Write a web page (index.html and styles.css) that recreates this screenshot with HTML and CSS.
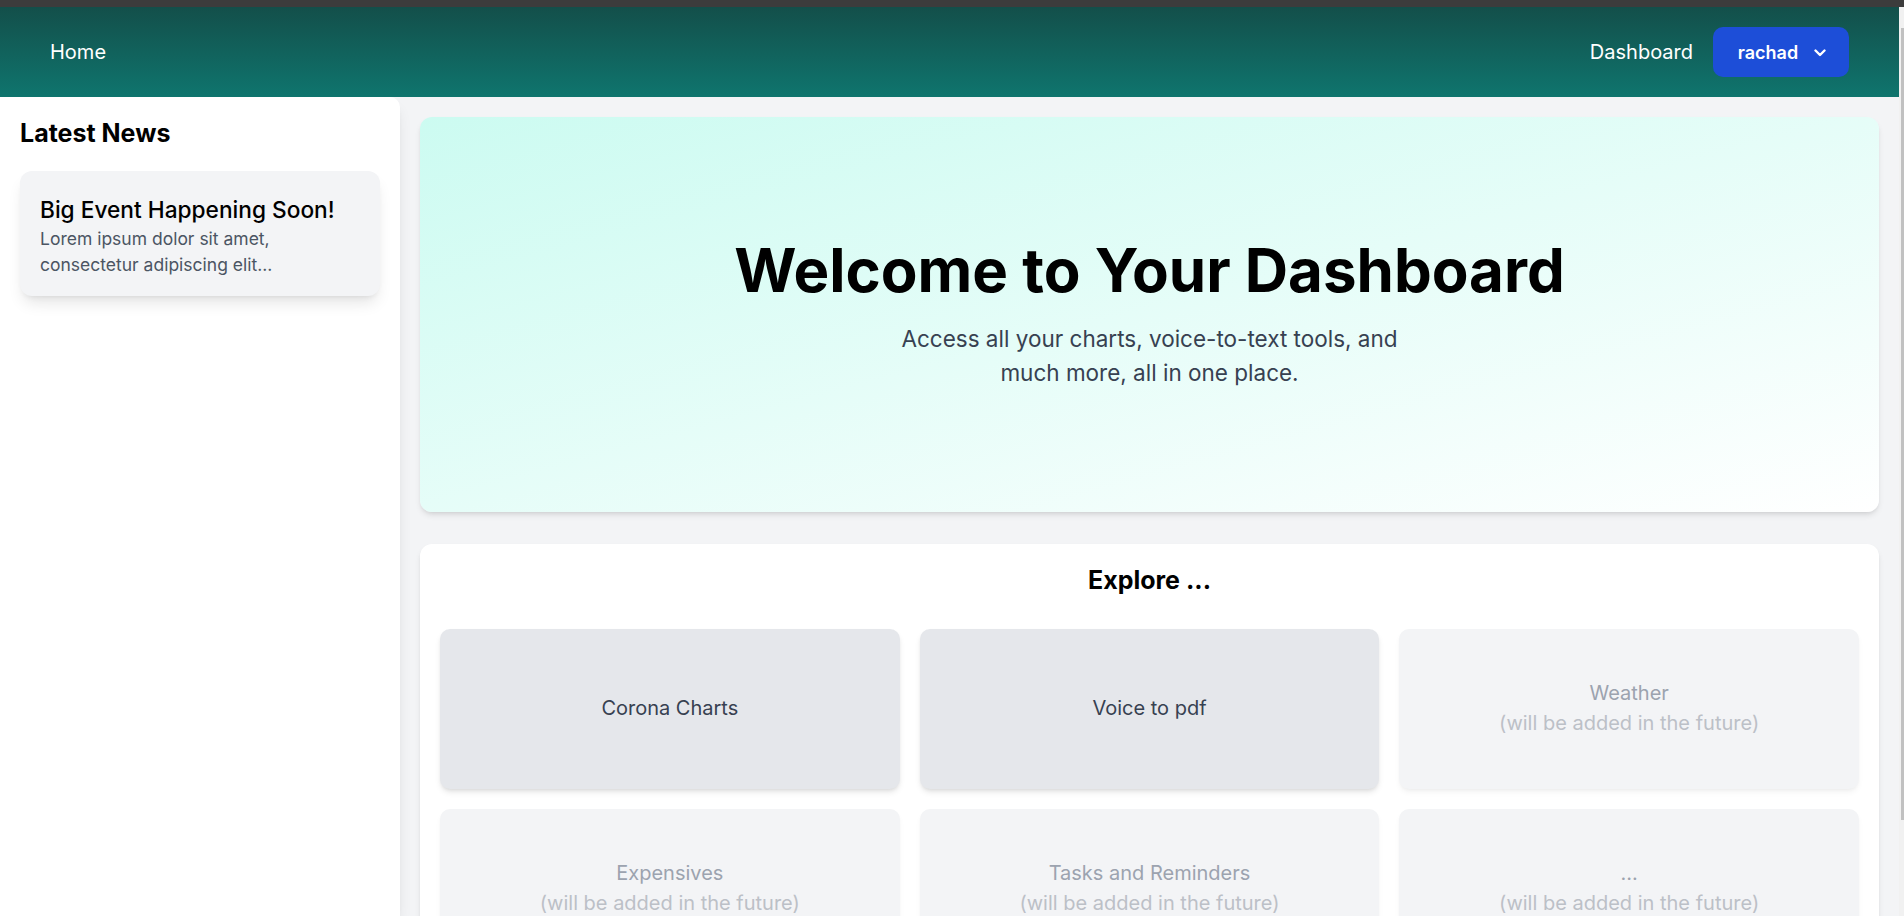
FILE: index.html
```html
<!DOCTYPE html>
<html lang="en">
<head>
<meta charset="utf-8">
<title>Dashboard</title>
<link rel="stylesheet" href="styles.css">
</head>
<body>
<div class="topstrip"></div>
<div class="frame">
  <div class="page">
    <header class="header">
      <a class="nav-link" href="#">Home</a>
      <div class="nav-right">
        <a class="nav-link" href="#">Dashboard</a>
        <button class="user-btn" type="button">
          <span>rachad</span>
          <svg class="chev" width="12" height="8" viewBox="0 0 12 8" aria-hidden="true"><path d="M1.5 1.5 L6 6 L10.5 1.5" fill="none" stroke="#fff" stroke-width="2.4" stroke-linecap="round" stroke-linejoin="round"/></svg>
        </button>
      </div>
    </header>
    <div class="layout">
      <aside class="sidebar">
        <h2 class="side-title">Latest News</h2>
        <div class="news-card">
          <h3 class="news-title">Big Event Happening Soon!</h3>
          <p class="news-text">Lorem ipsum dolor sit amet, consectetur adipiscing elit...</p>
        </div>
      </aside>
      <main class="main">
        <section class="hero">
          <h1 class="hero-title">Welcome to Your Dashboard</h1>
          <p class="hero-sub">Access all your charts, voice-to-text tools, and much more, all in one place.</p>
        </section>
        <section class="explore">
          <h2 class="explore-title">Explore ...</h2>
          <div class="tiles">
            <a class="tile active" href="#"><span class="tile-name">Corona Charts</span></a>
            <a class="tile active" href="#"><span class="tile-name">Voice to pdf</span></a>
            <div class="tile soon"><span class="tile-name">Weather</span><span class="tile-note">(will be added in the future)</span></div>
            <div class="tile soon"><span class="tile-name">Expensives</span><span class="tile-note">(will be added in the future)</span></div>
            <div class="tile soon"><span class="tile-name">Tasks and Reminders</span><span class="tile-note">(will be added in the future)</span></div>
            <div class="tile soon"><span class="tile-name">...</span><span class="tile-note">(will be added in the future)</span></div>
          </div>
        </section>
      </main>
    </div>
  </div>
  <div class="scrollbar"><div class="thumb"></div></div>
</div>
</body>
</html>
```
FILE: styles.css
```css
* { box-sizing: border-box; }
html, body { margin: 0; padding: 0; height: 100%; overflow: hidden; }
body {
  font-family: Inter, "Noto Sans", "Liberation Sans", sans-serif;
  background: #f3f4f6;
  color: #000;
}
.topstrip { height: 7px; background: #3c3c3c; }
.frame { display: flex; height: calc(100vh - 7px); }
.page { flex: 1; display: flex; flex-direction: column; min-width: 0; background: #f3f4f6; }
.scrollbar { width: 5px; background: #f1f1f1; padding-top: 21px; }
.thumb { margin-left: 2px; width: 3px; height: 792px; background: #c1c1c1; }

.header {
  height: 90px;
  flex-shrink: 0;
  background: linear-gradient(to bottom, #134f4a, #0f756e);
  display: flex;
  align-items: center;
  justify-content: space-between;
  padding: 0 50px;
}
.nav-link { color: #fff; text-decoration: none; font-size: 20px; line-height: 28px; }
.nav-right { display: flex; align-items: center; gap: 20px; }
.user-btn {
  width: 136px; height: 50px;
  display: flex; align-items: center; justify-content: center; gap: 16px;
  background: #1d4ed8; color: #fff; border: 0; border-radius: 10px;
  font-family: inherit; font-size: 18px; font-weight: 600; padding: 0 0 0 2px;
}
.chev { display: block; margin-top: 1px; }

.layout { flex: 1; display: flex; min-height: 0; }
.sidebar {
  width: 400px; flex-shrink: 0;
  background: #fff;
  border-top-right-radius: 10px;
  box-shadow: 0 10px 15px -3px rgba(0,0,0,0.1), 0 4px 6px -4px rgba(0,0,0,0.1);
  padding: 20px;
  position: relative; z-index: 1;
}
.side-title { margin: 0 0 22px; font-size: 25px; line-height: 32px; font-weight: 700; }
.news-card {
  background: #f3f4f6;
  border-radius: 12px;
  padding: 25px 20px 18px;
  box-shadow: 0 10px 15px -3px rgba(0,0,0,0.1), 0 4px 6px -4px rgba(0,0,0,0.1);
}
.news-title { margin: 0 0 2px; font-size: 22.7px; line-height: 28px; font-weight: 500; }
.news-text { margin: 0; font-size: 17.5px; line-height: 26px; color: #4b5563; }

.main { flex: 1; padding: 20px; display: flex; flex-direction: column; gap: 32px; min-width: 0; }
.hero {
  height: 395px; flex-shrink: 0;
  border-radius: 12px;
  background: linear-gradient(to bottom right, #ccfbf1, #ffffff);
  box-shadow: 0 4px 6px -1px rgba(0,0,0,0.1), 0 2px 4px -2px rgba(0,0,0,0.1);
  display: flex; flex-direction: column; align-items: center; justify-content: center;
  text-align: center;
}
.hero-title { margin: 0 0 22px; font-size: 60px; line-height: 60px; font-weight: 700; }
.hero-sub { margin: 0; max-width: 512px; font-size: 22.5px; line-height: 34px; color: #374151; }

.explore {
  flex-shrink: 0;
  background: #fff;
  border-radius: 12px;
  box-shadow: 0 4px 6px -1px rgba(0,0,0,0.1), 0 2px 4px -2px rgba(0,0,0,0.1);
  padding: 20px;
}
.explore-title { margin: 0 0 33px; text-align: center; font-size: 25px; line-height: 32px; font-weight: 700; }
.tiles { display: grid; grid-template-columns: repeat(3, 1fr); gap: 20px; }
.tile {
  height: 160px;
  border-radius: 10px;
  display: flex; flex-direction: column; align-items: center; justify-content: center;
  text-decoration: none;
  font-size: 20px; line-height: 30px;
  padding-bottom: 2px;
  box-shadow: 0 4px 6px -1px rgba(0,0,0,0.1), 0 2px 4px -2px rgba(0,0,0,0.1);
}
.tile.active { background: #e5e7eb; color: #374151; }
.tile.soon { background: #f3f4f6; color: #9ca3af; box-shadow: 0 4px 6px -1px rgba(0,0,0,0.05), 0 2px 4px -2px rgba(0,0,0,0.05); }
.tile.soon .tile-note { color: #bcc0c7; }
```
